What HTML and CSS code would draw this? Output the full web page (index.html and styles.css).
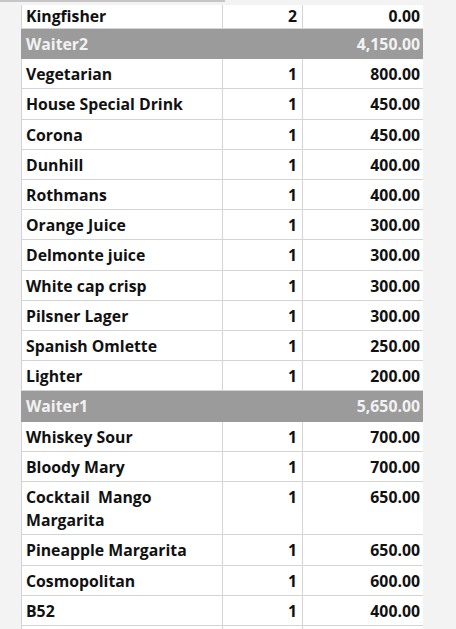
FILE: index.html
```html
<!DOCTYPE html>
<html>
<head>
<meta charset="utf-8">
<link rel="stylesheet" href="styles.css">
</head>
<body>
<div class="topbar"></div>
<div class="viewport">
<table class="report">
<colgroup><col class="c-name"><col class="c-qty"><col class="c-amt"></colgroup>
<tbody>
<tr class="first"><td>Kingfisher</td><td class="num">2</td><td class="num">0.00</td></tr>
<tr class="group"><td colspan="2">Waiter2</td><td class="num">4,150.00</td></tr>
<tr><td>Vegetarian</td><td class="num">1</td><td class="num">800.00</td></tr>
<tr><td>House Special Drink</td><td class="num">1</td><td class="num">450.00</td></tr>
<tr><td>Corona</td><td class="num">1</td><td class="num">450.00</td></tr>
<tr><td>Dunhill</td><td class="num">1</td><td class="num">400.00</td></tr>
<tr><td>Rothmans</td><td class="num">1</td><td class="num">400.00</td></tr>
<tr><td>Orange Juice</td><td class="num">1</td><td class="num">300.00</td></tr>
<tr><td>Delmonte juice</td><td class="num">1</td><td class="num">300.00</td></tr>
<tr><td>White cap crisp</td><td class="num">1</td><td class="num">300.00</td></tr>
<tr><td>Pilsner Lager</td><td class="num">1</td><td class="num">300.00</td></tr>
<tr><td>Spanish Omlette</td><td class="num">1</td><td class="num">250.00</td></tr>
<tr><td>Lighter</td><td class="num">1</td><td class="num">200.00</td></tr>
<tr class="group"><td colspan="2">Waiter1</td><td class="num">5,650.00</td></tr>
<tr><td>Whiskey Sour</td><td class="num">1</td><td class="num">700.00</td></tr>
<tr><td>Bloody Mary</td><td class="num">1</td><td class="num">700.00</td></tr>
<tr><td>Cocktail&nbsp; Mango<br>Margarita</td><td class="num">1</td><td class="num">650.00</td></tr>
<tr><td>Pineapple Margarita</td><td class="num">1</td><td class="num">650.00</td></tr>
<tr><td>Cosmopolitan</td><td class="num">1</td><td class="num">600.00</td></tr>
<tr><td>B52</td><td class="num">1</td><td class="num">400.00</td></tr>
<tr><td>&nbsp;</td><td class="num">&nbsp;</td><td class="num">&nbsp;</td></tr>
</tbody>
</table>
</div>
</body>
</html>
```
FILE: styles.css
```css
html, body {
  margin: 0;
  padding: 0;
  background: #f3f3f3;
  height: 629px;
  overflow: hidden;
}
.topbar {
  width: 225px;
  height: 2px;
  background: #c6c6c6;
}
.viewport {
  margin-top: 3px;
  margin-left: 21px;
  width: 402px;
  overflow: hidden;
}
.report {
  border-collapse: collapse;
  width: 402px;
  table-layout: fixed;
  background: #ffffff;
  font-family: "Open Sans", "Noto Sans", sans-serif;
  font-weight: 700;
  font-size: 15.8px;
  color: #111;
}
.c-name { width: 201px; }
.c-qty { width: 80px; }
.c-amt { width: 121px; }
.report td {
  border: 1px solid #d4d4d4;
  padding: 4px 5px 2px 4px;
  line-height: 23.2px;
  vertical-align: top;
  white-space: nowrap;
}
.report tr:first-child td { border-top: none; }
.report td.num { text-align: right; }
.report td:last-child { padding-right: 3px; }
.report tr.first td { padding-top: 1px; line-height: 20px; }
.report tr.group td {
  background: #9b9b9b;
  color: #f2f2f2;
  border-color: #9b9b9b;
}
```
